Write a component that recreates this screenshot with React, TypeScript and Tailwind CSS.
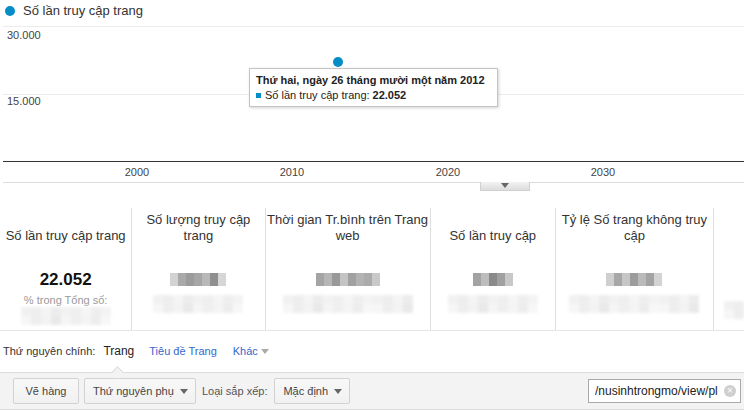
import React from "react";

const BLUE = "#058dc7";

const scorecards = [
  { title: ["Số lần truy cập trang"], w: 133, main: true },
  { title: ["Số lượng truy cập", "trang"], w: 134, dark: ["#d2d2d2", "#a9a9a9", "#9b9b9b", "#a6a6a6", "#b8b8b8", "#8f8f8f", "#d6d6d6"] },
  { title: ["Thời gian Tr.bình trên Trang", "web"], w: 166, dark: ["#a4a4a4", "#b6b6b6", "#999999", "#c4c4c4", "#a1a1a1", "#b3b3b3", "#ababab", "#c9c9c9"] },
  { title: ["Số lần truy cập"], w: 126, dark: ["#a3a3a3", "#bdbdbd", "#8a8a8a", "#a0a0a0", "#c8c8c8"] },
  { title: ["Tỷ lệ Số trang không truy", "cập"], w: 159, dark: ["#cfcfcf", "#a7a7a7", "#c6c6c6", "#9c9c9c", "#bababa", "#a3a3a3", "#d3d3d3"] },
];

const lightA = ["#f1f1f1", "#eeeeee", "#f4f4f4", "#ececec", "#f2f2f2", "#efefef", "#f5f5f5", "#eeeeee", "#f3f3f3"];
const lightB = ["#f6f6f6", "#eeeeee", "#f3f3f3", "#e9e9e9", "#f5f5f5", "#efefef", "#f4f4f4", "#ededed", "#f7f7f7"];

function Mosaic({ cells, cw, h }: { cells: string[]; cw: number; h: number }) {
  return (
    <div className="flex blur-[0.4px]">
      {cells.map((c, i) => (
        <div key={i} style={{ background: c, width: cw, height: h }} />
      ))}
    </div>
  );
}

function LightBlur({ width }: { width: number }) {
  const n = Math.round(width / 10);
  return (
    <div className="flex flex-col blur-[1.5px]">
      <Mosaic cells={lightA.concat(lightA).slice(0, n)} cw={10} h={9} />
      <Mosaic cells={lightB.concat(lightB).slice(0, n)} cw={10} h={9} />
    </div>
  );
}

function Caret({ className = "" }: { className?: string }) {
  return <span className={"inline-block w-0 h-0 border-l-[4px] border-r-[4px] border-t-[5px] border-l-transparent border-r-transparent " + className} />;
}

function Chart() {
  const years = [
    { x: 137, t: "2000" },
    { x: 292, t: "2010" },
    { x: 448, t: "2020" },
    { x: 603, t: "2030" },
  ];
  return (
    <div className="relative h-[196px]">
      <div className="flex items-center h-[22px] pl-[5px] gap-[8px]">
        <span className="w-[10px] h-[10px] rounded-full" style={{ background: BLUE }} />
        <span className="text-[13px] text-[#333]">Số lần truy cập trang</span>
      </div>
      <svg width="744" height="170" className="block">
        <line x1="3" y1="4.5" x2="744" y2="4.5" stroke="#ececec" />
        <line x1="3" y1="72.5" x2="744" y2="72.5" stroke="#ececec" />
        <line x1="3" y1="139.5" x2="744" y2="139.5" stroke="#333" />
        <line x1="3" y1="160.5" x2="744" y2="160.5" stroke="#dcdcdc" />
        <text x="7" y="17" fontSize="11" fill="#444">30.000</text>
        <text x="7" y="83" fontSize="11" fill="#444">15.000</text>
        {years.map((y) => (
          <text key={y.t} x={y.x} y="154" fontSize="11" fill="#444" textAnchor="middle">
            {y.t}
          </text>
        ))}
        <circle cx="338" cy="40" r="5" fill={BLUE} />
      </svg>
      <div className="absolute left-[249px] top-[68px] w-[249px] h-[39px] bg-white border border-[#c4c4c4] shadow-[1px_1px_3px_rgba(0,0,0,0.18)] px-[6px] pt-[4px] text-[11px] text-[#222] leading-[15px]">
        <div className="font-bold">Thứ hai, ngày 26 tháng mười một năm 2012</div>
        <div className="flex items-center">
          <span className="w-[5px] h-[5px] mr-[4px]" style={{ background: BLUE }} />
          <span>Số lần truy cập trang: </span>
          <span className="font-bold ml-[3px]">22.052</span>
        </div>
      </div>
      <div className="absolute left-[480px] top-[182px] w-[50px] h-[9px] border border-t-0 border-[#d0d0d0] bg-gradient-to-b from-[#f2f2f2] to-[#dddddd] flex justify-center items-start pt-[1px]">
        <Caret className="border-t-[#666] border-l-[4px] border-r-[4px] border-t-[4px]" />
      </div>
    </div>
  );
}

function Scorecards() {
  return (
    <div className="mt-[12px] flex border-b border-[#e6e6e6] h-[123px]">
      {scorecards.map((s, i) => (
        <div key={i} className="flex flex-col items-center border-r border-[#dedede]" style={{ width: s.w }}>
          <div className="h-[34px] mt-[2px] flex flex-col justify-end items-center text-center text-[13px] leading-[16px] text-[#333] whitespace-nowrap">
            {s.title.map((t) => (
              <div key={t}>{t}</div>
            ))}
          </div>
          {s.main ? (
            <>
              <div className="mt-[26px] h-[20px] text-[17px] font-bold text-[#111] leading-[20px]">22.052</div>
              <div className="mt-[3px] h-[14px] text-[11px] leading-[14px] text-[#999]">% trong Tổng số:</div>
              <div>
                <LightBlur width={88} />
              </div>
            </>
          ) : (
            <>
              <div className="mt-[29px]">
                <Mosaic cells={s.dark!} cw={8} h={13} />
              </div>
              <div className="mt-[9px]">
                <LightBlur width={s.w > 150 ? 130 : 90} />
              </div>
            </>
          )}
        </div>
      ))}
      <div className="flex-1 flex flex-col items-start pt-[93px] pl-[10px]">
        <LightBlur width={20} />
      </div>
    </div>
  );
}

function Toolbar() {
  const btn = "h-[26px] border border-[#d2d2d2] rounded-[2px] bg-gradient-to-b from-[#f8f8f8] to-[#f1f1f1] flex items-center text-[11px] text-[#444]";
  return (
    <div className="relative mt-[3px] h-[38px] border-t border-b border-[#dcdcdc] bg-[#f3f3f3] flex items-center pl-[13px] pr-[3px]">
      <div className="absolute left-[113px] top-[-5px] w-[9px] h-[9px] rotate-45 bg-[#f3f3f3] border-t border-l border-[#dcdcdc]" />
      <div className={btn + " w-[66px] justify-center"}>Vẽ hàng</div>
      <div className={btn + " ml-[5px] w-[112px] pl-[8px] pr-[7px] justify-between"}>
        <span>Thứ nguyên phụ</span>
        <Caret className="border-t-[#666]" />
      </div>
      <span className="ml-[6px] text-[11px] text-[#555]">Loại sắp xếp:</span>
      <div className={btn + " ml-[7px] w-[76px] pl-[8px] pr-[7px] justify-between"}>
        <span>Mặc định</span>
        <Caret className="border-t-[#666]" />
      </div>
      <div className="ml-auto h-[24px] w-[153px] bg-white border border-[#a9a9a9] flex items-center pl-[6px] pr-[4px] text-[12px] text-[#222] overflow-hidden">
        <span className="flex-1 whitespace-nowrap overflow-hidden">/nusinhtrongmo/view/pl</span>
        <span className="w-[12px] h-[12px] rounded-full bg-[#cfcfcf] flex items-center justify-center text-white text-[10px] leading-none ml-[2px]">
          ×
        </span>
      </div>
    </div>
  );
}

export default function App() {
  return (
    <div className="w-[744px] h-[416px] bg-white overflow-hidden font-['Liberation_Sans',Arial,sans-serif]">
      <Chart />
      <Scorecards />
      <div className="h-[38px] flex items-center pl-[3px] pt-[2px] text-[11px]">
        <span className="text-[#333]">Thứ nguyên chính:</span>
        <span className="ml-[8px] text-[12px] text-[#222]">Trang</span>
        <span className="ml-[15px] text-[#3366cc]">Tiêu đề Trang</span>
        <span className="ml-[16px] text-[#3366cc]">Khác</span>
        <Caret className="ml-[3px] border-t-[#aaa]" />
      </div>
      <Toolbar />
    </div>
  );
}
